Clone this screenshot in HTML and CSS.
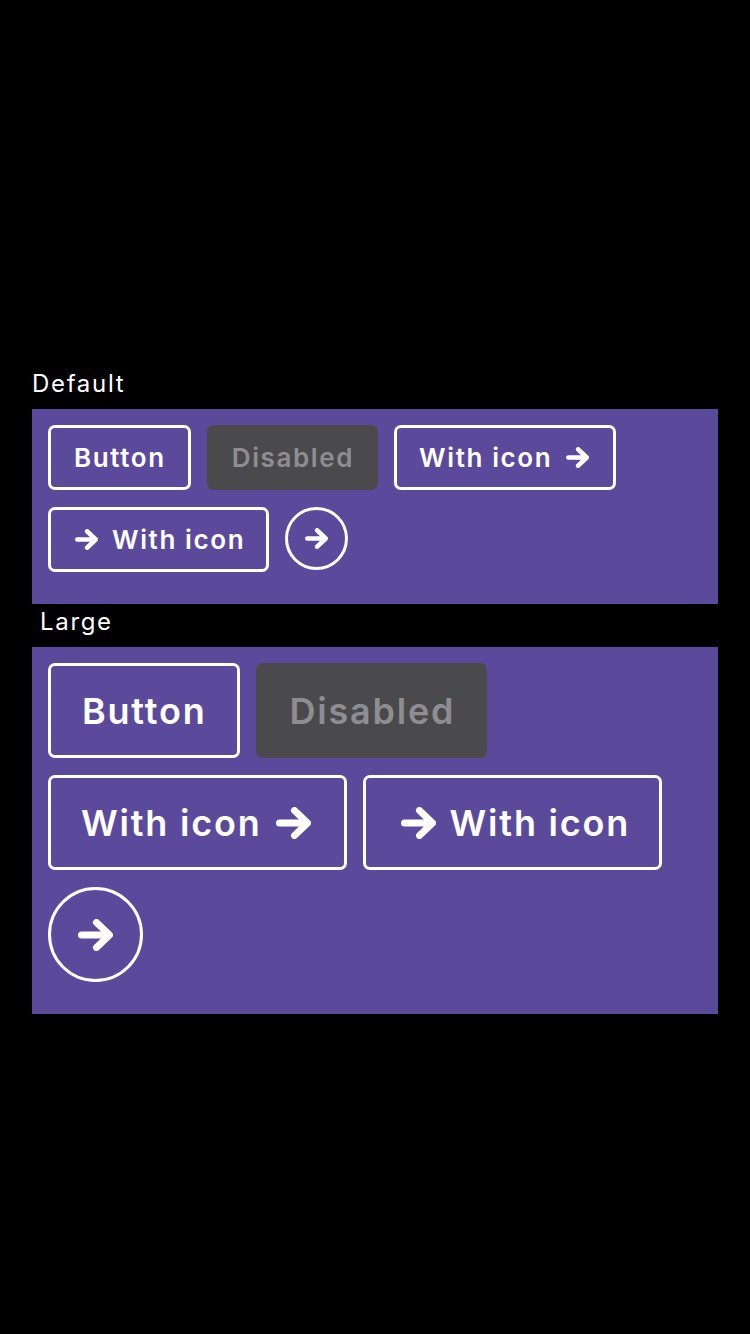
FILE: index.html
```html
<!DOCTYPE html>
<html>
<head>
<meta charset="utf-8">
<link rel="stylesheet" href="styles.css">
</head>
<body>
<svg width="0" height="0" class="defs">
  <defs>
    <symbol id="arrow" viewBox="0 0 35 32">
      <path d="M3.5 16 H30.5 M18.5 3.5 L31.5 16 L18.5 28.5" fill="none" stroke="currentColor" stroke-width="7" stroke-linecap="round" stroke-linejoin="round"/>
    </symbol>
  </defs>
</svg>
<main class="page">
  <div class="label">Default</div>
  <section class="panel">
    <button class="btn">Button</button>
    <button class="btn disabled" disabled>Disabled</button>
    <button class="btn icon-right">With icon <svg class="ico"><use href="#arrow"/></svg></button>
    <button class="btn icon-left"><svg class="ico"><use href="#arrow"/></svg> With icon</button>
    <button class="btn circle"><svg class="ico"><use href="#arrow"/></svg></button>
  </section>
  <div class="label label-large">Large</div>
  <section class="panel large">
    <button class="btn">Button</button>
    <button class="btn disabled" disabled>Disabled</button>
    <button class="btn icon-right">With icon <svg class="ico"><use href="#arrow"/></svg></button>
    <button class="btn icon-left"><svg class="ico"><use href="#arrow"/></svg> With icon</button>
    <button class="btn circle"><svg class="ico"><use href="#arrow"/></svg></button>
  </section>
</main>
</body>
</html>
```
FILE: styles.css
```css
html, body {
  margin: 0;
  padding: 0;
  background: #000;
}
.defs {
  position: absolute;
  width: 0;
  height: 0;
}
.page {
  padding: 370px 32px 0;
  font-family: Inter, "Noto Sans", sans-serif;
  color: #fff;
}
.label {
  font-size: 24px;
  line-height: 28px;
  height: 28px;
  margin-bottom: 11px;
  letter-spacing: 0.07em;
}
.label-large {
  margin-top: 4px;
  margin-left: 8px;
}
.panel {
  background: #5b4a9b;
  padding: 16px 16px 32px;
  display: flex;
  flex-wrap: wrap;
  align-items: flex-start;
  column-gap: 16px;
  row-gap: 17px;
}
.btn {
  font-family: Inter, "Noto Sans", sans-serif;
  font-weight: 600;
  font-size: 26px;
  letter-spacing: 0.062em;
  color: #fff;
  background: transparent;
  border: 3px solid #fff;
  border-radius: 7px;
  height: 65px;
  padding: 0 22px 0 23px;
  display: inline-flex;
  align-items: center;
  gap: 14px;
  box-sizing: border-box;
  white-space: nowrap;
}
.btn .ico {
  width: 23px;
  height: 21px;
  flex: none;
}
.btn.disabled,
.btn.icon-left { padding: 0 21px 0 22px; }
.btn.icon-right { padding: 0 22px 0 22px; }
.btn.icon-right .ico { margin-right: 2px; }
.btn.icon-left .ico { margin-left: 2px; }
.btn.disabled {
  background: #4a4a4c;
  border-color: #4a4a4c;
  color: #8e8e92;
}
.btn.circle {
  width: 63px;
  height: 63px;
  border-radius: 50%;
  padding: 0;
  justify-content: center;
}
.large .btn {
  font-size: 36px;
  letter-spacing: 0.05em;
  height: 95px;
  padding: 0 31px 0 31px;
  gap: 14px;
}
.large .btn .ico {
  width: 35px;
  height: 32px;
}
.large .btn.disabled,
.large .btn.icon-left { padding: 0 29px 0 30px; }
.large .btn.icon-right { padding: 0 28px 0 30px; }
.large .btn.icon-right .ico { margin-right: 5px; }
.large .btn.icon-left .ico { margin-left: 5px; }
.large .btn.circle {
  width: 95px;
  height: 95px;
  padding: 0;
}
```
